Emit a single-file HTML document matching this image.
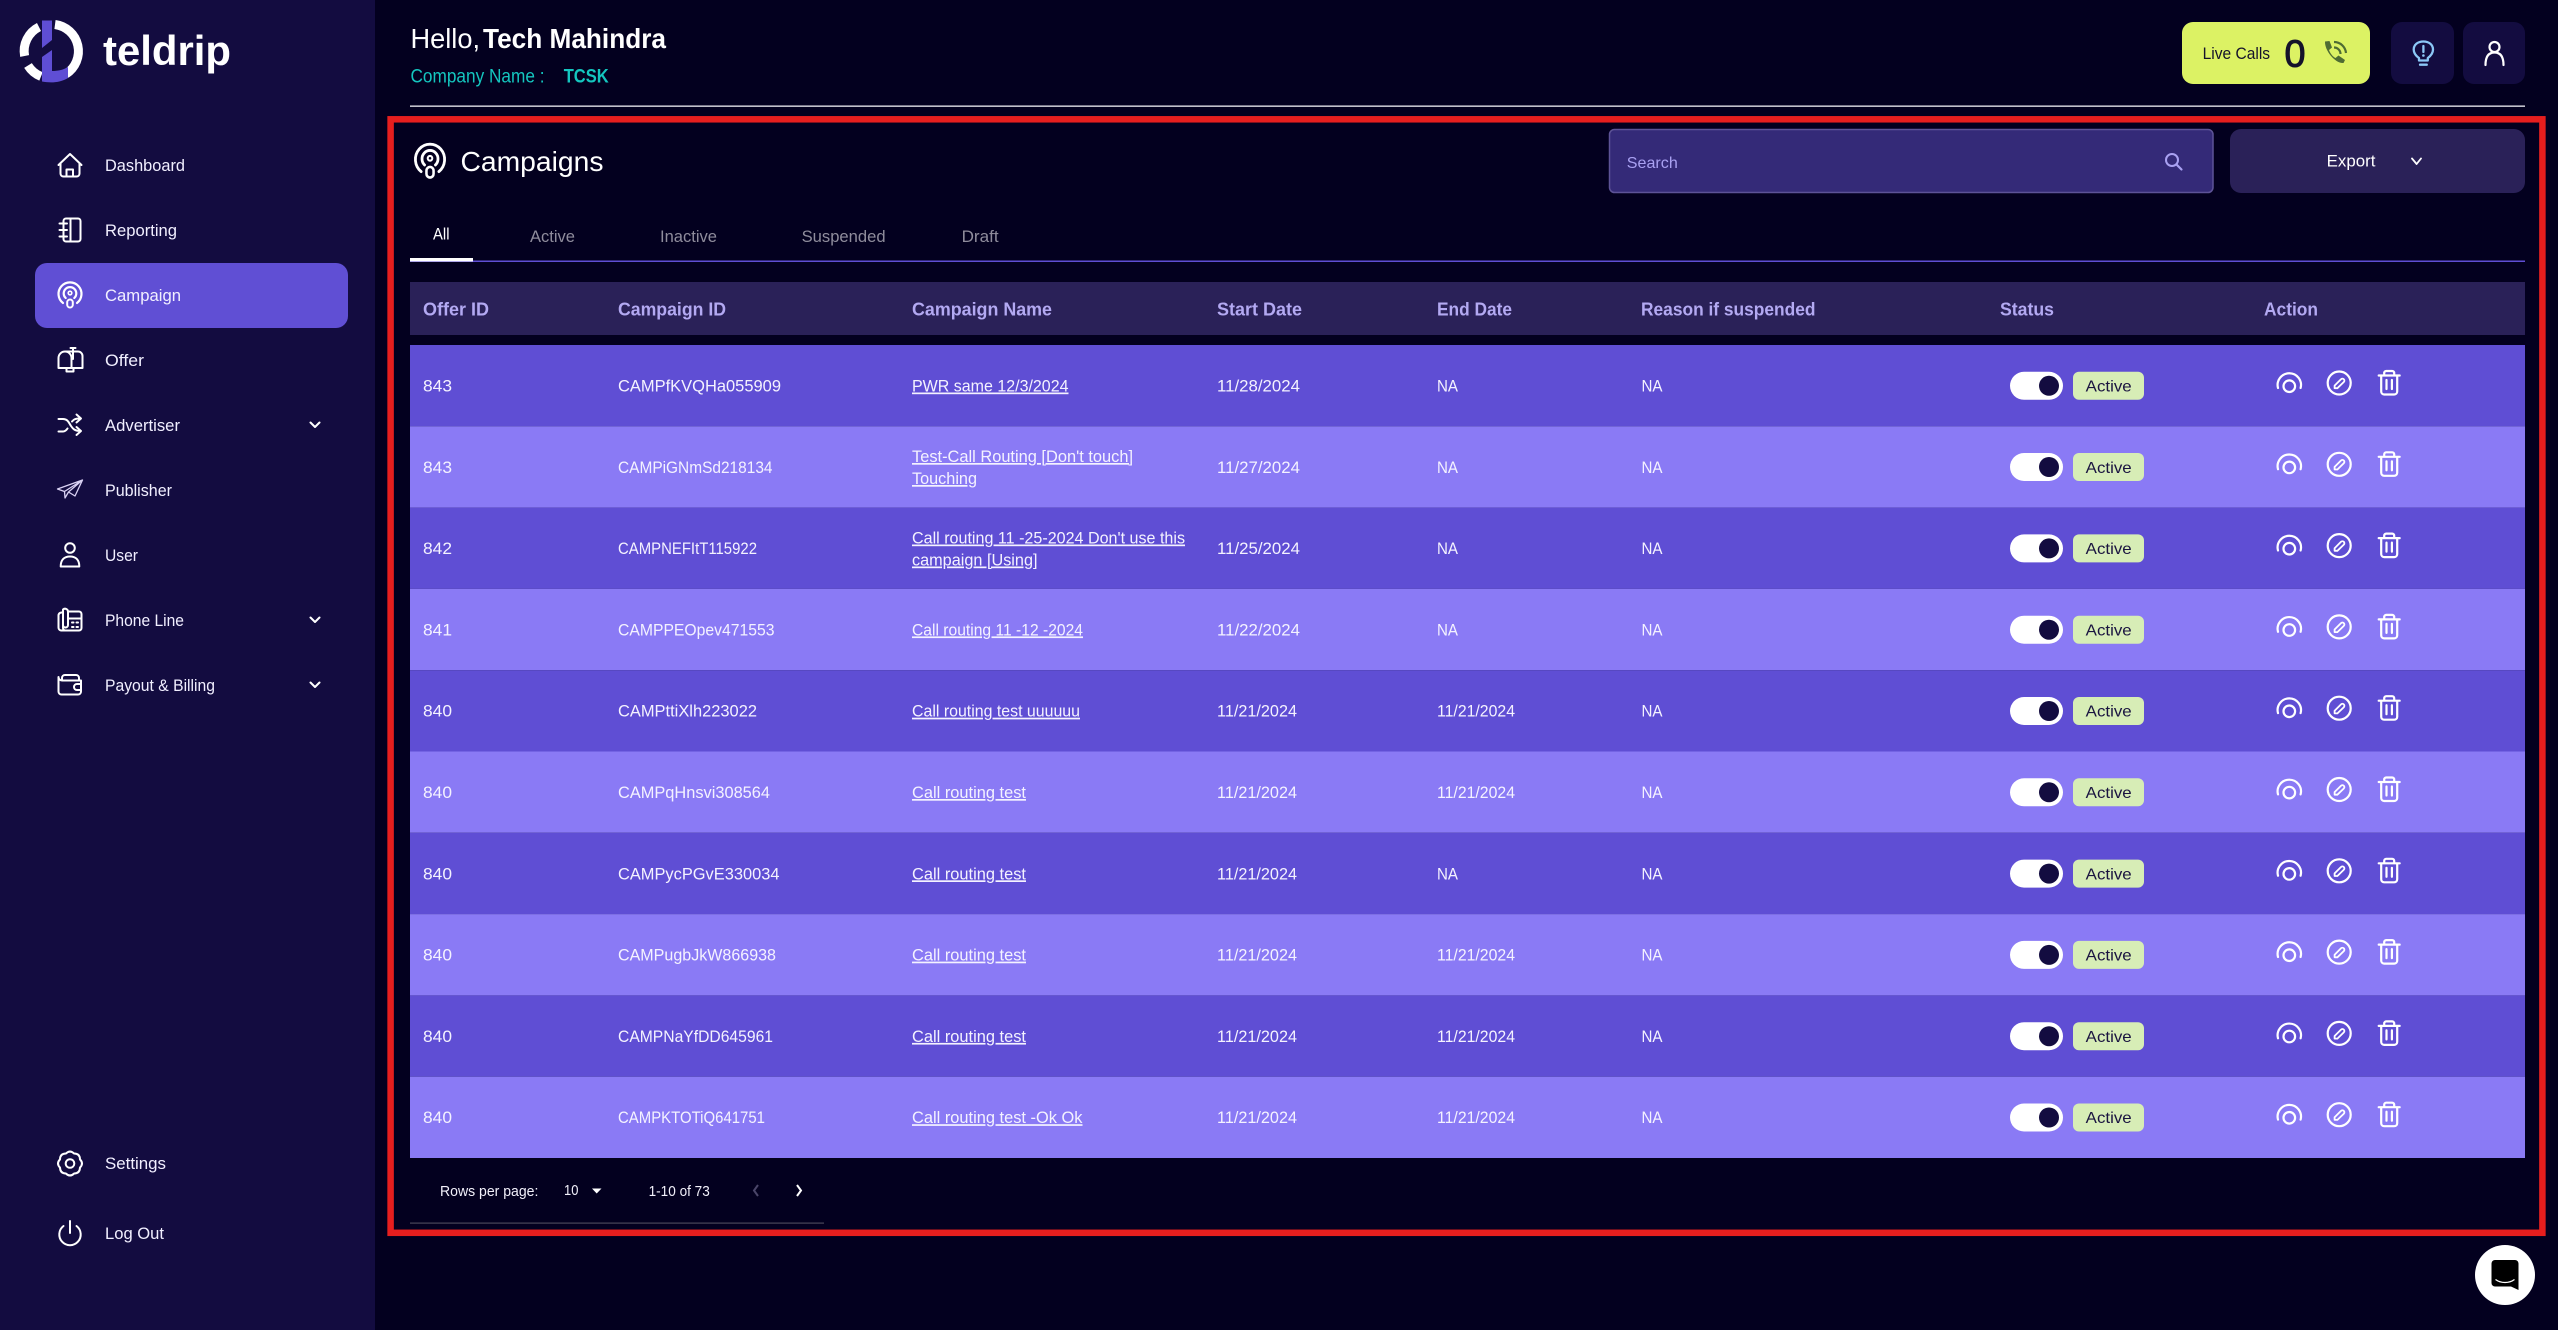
<!DOCTYPE html>
<html lang="en">
<head>
<meta charset="utf-8">
<title>Campaigns</title>
<style>
html,body{margin:0;padding:0;background:#03001f;width:2558px;height:1330px;overflow:hidden}
svg{display:block}
text{font-family:"Liberation Sans",sans-serif;white-space:pre}
.n{font-size:16.500px;fill:#f1efff}
.th{font-size:18.300px;fill:#b3a9f2;font-weight:bold}
.td{font-size:17px;fill:#f4f2ff}
.a{font-size:17px;fill:#f4f2ff;text-decoration:underline}
.b{font-size:16px;fill:#1a1440}
.tab{font-size:16.500px;fill:#8f8c9c}
.i{fill:none;stroke:#fff;stroke-width:2;stroke-linecap:round;stroke-linejoin:round}
</style>
</head>
<body>
<svg xmlns="http://www.w3.org/2000/svg" width="2558" height="1330" viewBox="0 0 2558 1330">
<defs>
<g id="eye" fill="none" stroke="#fff" stroke-width="2.200" stroke-linecap="round"><path d="M-11.300 2.500A11.700 11.700 0 1 1 11.300 2.500"/><circle cx="0" cy="0.700" r="5.800"/></g>
<g id="edit" fill="none" stroke="#fff" stroke-width="2.200" stroke-linecap="round" stroke-linejoin="round"><circle r="11.500"/><path d="M-4.600 2.600L1.800-3.800A1.900 1.900 0 0 1 4.600-1L-1.800 5.200L-4.600 5.200Z" stroke-width="1.800"/></g>
<g id="trash" fill="none" stroke="#fff" stroke-width="2.200" stroke-linecap="round" stroke-linejoin="round"><path d="M-10.500-7.500H10.500M-5-7.500V-10A2 2 0 0 1-3-12H3A2 2 0 0 1 5-10V-7.500M-8-7.500V8.500A3 3 0 0 0-5 11.500H5A3 3 0 0 0 8 8.500V-7.500M-2.700-3V6M2.700-3V6"/></g>
<g id="bc" fill="none" stroke-linecap="round">
<path d="M6 21.500A11.500 11.500 0 1 1 20 21.500" stroke-width="2.200"/>
<path d="M8.700 16.500A6.300 6.300 0 1 1 17.300 16.500" stroke-width="2.200"/>
<circle cx="13" cy="11.500" r="1.800" stroke-width="1.600"/>
<rect x="10.200" y="18" width="5.600" height="8" rx="2.800" stroke-width="2"/>
</g>
<g id="row-t"><rect x="0" y="-14" width="53" height="28" rx="14" fill="#fff"/><circle cx="39" cy="0" r="10" fill="#130c40"/><rect x="63" y="-14" width="71" height="28" rx="6" fill="#d7edb6"/></g>
</defs>

<rect width="2558" height="1330" fill="#03001f"/>
<rect width="375" height="1330" fill="#130c40"/>

<!-- logo -->
<g fill="none" stroke="#fff" stroke-width="9">
<path d="M39 27A27 27 0 0 0 24.600 56"/>
<path d="M55 24.500A27 27 0 0 1 66 74"/>
<path d="M28 65.500A27 27 0 0 0 41 76.400"/>
</g>
<path d="M42 20.500H52V40L42 48ZM42 57L52 50V71C58 71 63 70 68 67V78C60 83 50 83 42 81.500Z" fill="#5f4ed4"/>
<text x="103" y="65" font-size="42" font-weight="bold" fill="#fff" textLength="128" lengthAdjust="spacingAndGlyphs">teldrip</text>

<!-- nav -->
<rect x="35" y="263" width="313" height="65" rx="12" fill="#604fd4"/>
<text class="n" x="105" y="171" textLength="80" lengthAdjust="spacingAndGlyphs">Dashboard</text>
<text class="n" x="105" y="236" textLength="72" lengthAdjust="spacingAndGlyphs">Reporting</text>
<text class="n" x="105" y="301" textLength="76" lengthAdjust="spacingAndGlyphs">Campaign</text>
<text class="n" x="105" y="366" textLength="39" lengthAdjust="spacingAndGlyphs">Offer</text>
<text class="n" x="105" y="431" textLength="75" lengthAdjust="spacingAndGlyphs">Advertiser</text>
<text class="n" x="105" y="496" textLength="67" lengthAdjust="spacingAndGlyphs">Publisher</text>
<text class="n" x="105" y="561" textLength="33" lengthAdjust="spacingAndGlyphs">User</text>
<text class="n" x="105" y="626" textLength="79" lengthAdjust="spacingAndGlyphs">Phone Line</text>
<text class="n" x="105" y="691" textLength="110" lengthAdjust="spacingAndGlyphs">Payout &amp; Billing</text>
<text class="n" x="105" y="1169" textLength="61" lengthAdjust="spacingAndGlyphs">Settings</text>
<text class="n" x="105" y="1239" textLength="59" lengthAdjust="spacingAndGlyphs">Log Out</text>

<g class="i">
<!-- home -->
<path d="M58.500 165L70 154L81.500 165M60.500 163.500V173.500A3 3 0 0 0 63.500 176.500H76.500A3 3 0 0 0 79.500 173.500V163.500M66.500 176.500V169.500H73V176.500"/>
<!-- reporting -->
<path d="M66 218.500H78A2.500 2.500 0 0 1 80.500 221V239A2.500 2.500 0 0 1 78 241.500H66A2.500 2.500 0 0 1 63.500 239V221A2.500 2.500 0 0 1 66 218.500ZM70.500 218.500V241.500M59.500 223.500H67M59.500 230H67M59.500 236.500H67"/>
<!-- offer mailbox -->
<path d="M65 351.500H78A4.500 4.500 0 0 1 82.500 356V368H58.500V358A6.500 6.500 0 0 1 65 351.500A6.500 6.500 0 0 1 71.500 358V368M70.500 348H75.500M73 348V359M66.500 368V371.500H73.500V368"/>
<!-- shuffle -->
<path d="M58.500 419H63C68 419 69 423 71 426C73 429 75 431 80 431M58.500 431.500H63C65 431.500 66.500 430 67.500 428.500M72 421.500C74 419 76 418.500 80 418.500M76.500 414.500L81 418.500L76.500 422.500M76.500 427L81 431L76.500 435"/>
<!-- user -->
<circle cx="70" cy="548" r="4.800"/>
<path d="M60.700 566.500C60.700 560 64 556.500 70 556.500C76 556.500 79.300 560 79.300 566.500Z"/>
<!-- phone -->
<path d="M63 612V628A2.500 2.500 0 0 0 65.500 630.500H79A2.500 2.500 0 0 0 81.500 628V614A2.500 2.500 0 0 0 79 611.500H68M63 613A3 3 0 0 0 58.500 615V627.500A3 3 0 0 0 61 630.500H65.500M63 609.500A3 3 0 0 1 68 612V625A2.500 2.500 0 0 1 63 625ZM68 618.500H81.500"/>
<path d="M72 622.500h1.500M76.500 622.500h1.500M72 627h1.500M76.500 627h1.500"/>
<!-- wallet -->
<path d="M62 679.500V678A3 3 0 0 1 65 675H76A3 3 0 0 1 79 678V680M58.500 679V691.500A3 3 0 0 0 61.500 694.500H78A3 3 0 0 0 81 691.500V680.500H62A3.500 3.500 0 0 1 58.500 677V679M81 684H77A2.500 2.500 0 0 0 77 690H81"/>
<!-- settings gear -->
<path transform="translate(70 1163.500)" d="M9.980-4.130Q14 0 9.980 4.130Q9.900 9.900 4.130 9.980Q0 14-4.130 9.980Q-9.900 9.900-9.980 4.130Q-14 0-9.980-4.130Q-9.900-9.900-4.130-9.980Q0-14 4.130-9.980Q9.900-9.900 9.980-4.130Z"/>
<circle cx="70" cy="1163.500" r="4.300"/>
<!-- power -->
<path d="M70 1221V1233M63.500 1226A10.700 10.700 0 1 0 76.500 1226"/>
<!-- chevrons -->
<path d="M310.500 422.500L315 427L319.500 422.500M310.500 617.500L315 622L319.500 617.500M310.500 682.500L315 687L319.500 682.500"/>
</g>
<!-- publisher plane -->
<path d="M57.500 489L82.500 480L75 496L68.500 492L65 498L64.500 491.500ZM64.500 491.500L82.500 480L68.500 492" fill="none" stroke="#d9d1f3" stroke-width="1.300" stroke-linejoin="round"/>
<use href="#bc" x="57" y="281.500" stroke="#fff"/>

<!-- header -->
<text x="410.500" y="48" font-size="28" fill="#fff" textLength="69.500" lengthAdjust="spacingAndGlyphs">Hello,</text>
<text x="483" y="48" font-size="28" font-weight="bold" fill="#fff" textLength="183" lengthAdjust="spacingAndGlyphs">Tech Mahindra</text>
<text x="410.500" y="82.500" font-size="19" fill="#14c6bf" textLength="134" lengthAdjust="spacingAndGlyphs">Company Name :</text>
<text x="563.700" y="82.500" font-size="19" font-weight="bold" fill="#14c6bf" textLength="45" lengthAdjust="spacingAndGlyphs">TCSK</text>
<rect x="410" y="105.500" width="2115" height="1.300" fill="#f0f0f4"/>

<!-- live calls -->
<rect x="2182" y="22" width="188" height="62" rx="11" fill="#dcf264"/>
<text x="2202.600" y="59" font-size="16.500" fill="#15122b" textLength="67.500" lengthAdjust="spacingAndGlyphs">Live Calls</text>
<text x="2284.500" y="66.500" font-size="38" fill="#15122b" stroke="#15122b" stroke-width="1" textLength="21" lengthAdjust="spacingAndGlyphs">0</text>
<path d="M2325 41.500L2329.500 41L2332 47.500L2329 50C2330 53 2333 57 2335.500 58L2338.500 55.500L2345 60L2343.500 63C2336 64 2324.500 51 2325 41.500Z" fill="#4f6c33"/>
<path d="M2334 42A12 12 0 0 1 2346 53M2334 47.500A6.500 6.500 0 0 1 2340.500 54" fill="none" stroke="#4f6c33" stroke-width="2.200"/>
<rect x="2391" y="22" width="63" height="62" rx="11" fill="#130c40"/>
<rect x="2463" y="22" width="62" height="62" rx="11" fill="#130c40"/>
<path d="M2419 60.500V58C2415.500 55.500 2413.700 52.500 2413.700 49.500C2413.700 44.500 2418 41.500 2423.400 41.500C2428.800 41.500 2433 44.500 2433 49.500C2433 52.500 2431.200 55.500 2427.800 58V60.500ZM2420 64.700H2426.800M2423.400 46V52" fill="none" stroke="#8cc8f7" stroke-width="2.300" stroke-linecap="round" stroke-linejoin="round"/>
<circle cx="2423.400" cy="55.500" r="1.300" fill="#8cc8f7"/>
<circle cx="2494.500" cy="47" r="5" fill="none" stroke="#fff" stroke-width="2.200"/>
<path d="M2485.500 65C2485.500 56 2489 52.500 2494.500 52.500C2500 52.500 2503.500 56 2503.500 65" fill="none" stroke="#fff" stroke-width="2.200" stroke-linecap="round"/>

<!-- campaigns heading -->
<g transform="translate(413.500 143) scale(1.270 1.330)"><use href="#bc" stroke="#fff"/></g>
<text x="460.500" y="171" font-size="27.500" fill="#fff" textLength="143" lengthAdjust="spacingAndGlyphs">Campaigns</text>

<!-- search / export -->
<rect x="1609.500" y="129.500" width="603.500" height="63" rx="5" fill="#342a78" stroke="#5d5397" stroke-width="1.500"/>
<text x="1626.800" y="168" font-size="16" fill="#a9a1f2" textLength="51" lengthAdjust="spacingAndGlyphs">Search</text>
<circle cx="2172" cy="160" r="6" fill="none" stroke="#a9a1f2" stroke-width="2"/>
<path d="M2176.500 164.500L2181.500 169.500" stroke="#a9a1f2" stroke-width="2.200" stroke-linecap="round"/>
<rect x="2230" y="129" width="295" height="64" rx="11" fill="#2a2158"/>
<text x="2326.700" y="166.500" font-size="16.500" fill="#fff" textLength="48.700" lengthAdjust="spacingAndGlyphs">Export</text>
<path d="M2412 158.500L2416.600 164L2421 158.500" fill="none" stroke="#fff" stroke-width="1.800" stroke-linecap="round" stroke-linejoin="round"/>

<!-- tabs -->
<text x="433" y="239.500" font-size="16.500" fill="#fff" textLength="16.500" lengthAdjust="spacingAndGlyphs">All</text>
<text class="tab" x="530" y="242" textLength="45" lengthAdjust="spacingAndGlyphs">Active</text>
<text class="tab" x="660" y="242" textLength="57" lengthAdjust="spacingAndGlyphs">Inactive</text>
<text class="tab" x="801.600" y="242" textLength="84" lengthAdjust="spacingAndGlyphs">Suspended</text>
<text class="tab" x="961.600" y="242" textLength="37" lengthAdjust="spacingAndGlyphs">Draft</text>
<rect x="410" y="260.500" width="2115" height="1.500" fill="#5f4ed4"/>
<rect x="410" y="258" width="63" height="3.500" fill="#fff"/>

<!-- table head -->
<rect x="410" y="282" width="2115" height="53" fill="#2a2158"/>
<text class="th" x="423" y="315.500" textLength="66" lengthAdjust="spacingAndGlyphs">Offer ID</text>
<text class="th" x="618" y="315.500" textLength="108" lengthAdjust="spacingAndGlyphs">Campaign ID</text>
<text class="th" x="912" y="315.500" textLength="140" lengthAdjust="spacingAndGlyphs">Campaign Name</text>
<text class="th" x="1217" y="315.500" textLength="85" lengthAdjust="spacingAndGlyphs">Start Date</text>
<text class="th" x="1437" y="315.500" textLength="75" lengthAdjust="spacingAndGlyphs">End Date</text>
<text class="th" x="1641" y="315.500" textLength="174.500" lengthAdjust="spacingAndGlyphs">Reason if suspended</text>
<text class="th" x="2000" y="315.500" textLength="54" lengthAdjust="spacingAndGlyphs">Status</text>
<text class="th" x="2264" y="315.500" textLength="54" lengthAdjust="spacingAndGlyphs">Action</text>

<!-- rows -->
<rect x="410" y="345" width="2115" height="81.300" fill="#5f4ed4"/>
<rect x="410" y="426.300" width="2115" height="81.300" fill="#8a7af5"/>
<rect x="410" y="507.600" width="2115" height="81.300" fill="#5f4ed4"/>
<rect x="410" y="588.900" width="2115" height="81.300" fill="#8a7af5"/>
<rect x="410" y="670.200" width="2115" height="81.300" fill="#5f4ed4"/>
<rect x="410" y="751.500" width="2115" height="81.300" fill="#8a7af5"/>
<rect x="410" y="832.800" width="2115" height="81.300" fill="#5f4ed4"/>
<rect x="410" y="914.100" width="2115" height="81.300" fill="#8a7af5"/>
<rect x="410" y="995.400" width="2115" height="81.300" fill="#5f4ed4"/>
<rect x="410" y="1076.700" width="2115" height="81.300" fill="#8a7af5"/>

<!-- row 1 -->
<text class="td" x="423" y="391.500" textLength="29" lengthAdjust="spacingAndGlyphs">843</text>
<text class="td" x="618" y="391.500" textLength="163" lengthAdjust="spacingAndGlyphs">CAMPfKVQHa055909</text>
<text class="a" x="912" y="391.500" textLength="156.500" lengthAdjust="spacingAndGlyphs">PWR same 12/3/2024</text>
<text class="td" x="1217" y="391.500" textLength="83" lengthAdjust="spacingAndGlyphs">11/28/2024</text>
<text class="td" x="1437" y="391.500" textLength="21" lengthAdjust="spacingAndGlyphs">NA</text>
<text class="td" x="1641.500" y="391.500" textLength="21" lengthAdjust="spacingAndGlyphs">NA</text>
<!-- row 2 -->
<text class="td" x="423" y="472.800" textLength="29" lengthAdjust="spacingAndGlyphs">843</text>
<text class="td" x="618" y="472.800" textLength="154.500" lengthAdjust="spacingAndGlyphs">CAMPiGNmSd218134</text>
<text class="a" x="912" y="462" textLength="221" lengthAdjust="spacingAndGlyphs">Test-Call Routing [Don't touch]</text>
<text class="a" x="912" y="484" textLength="65" lengthAdjust="spacingAndGlyphs">Touching</text>
<text class="td" x="1217" y="472.800" textLength="83" lengthAdjust="spacingAndGlyphs">11/27/2024</text>
<text class="td" x="1437" y="472.800" textLength="21" lengthAdjust="spacingAndGlyphs">NA</text>
<text class="td" x="1641.500" y="472.800" textLength="21" lengthAdjust="spacingAndGlyphs">NA</text>
<!-- row 3 -->
<text class="td" x="423" y="554.100" textLength="29" lengthAdjust="spacingAndGlyphs">842</text>
<text class="td" x="618" y="554.100" textLength="139" lengthAdjust="spacingAndGlyphs">CAMPNEFItT115922</text>
<text class="a" x="912" y="543.500" textLength="273" lengthAdjust="spacingAndGlyphs">Call routing 11 -25-2024 Don't use this</text>
<text class="a" x="912" y="565.500" textLength="125.500" lengthAdjust="spacingAndGlyphs">campaign [Using]</text>
<text class="td" x="1217" y="554.100" textLength="83" lengthAdjust="spacingAndGlyphs">11/25/2024</text>
<text class="td" x="1437" y="554.100" textLength="21" lengthAdjust="spacingAndGlyphs">NA</text>
<text class="td" x="1641.500" y="554.100" textLength="21" lengthAdjust="spacingAndGlyphs">NA</text>
<!-- row 4 -->
<text class="td" x="423" y="635.400" textLength="29" lengthAdjust="spacingAndGlyphs">841</text>
<text class="td" x="618" y="635.400" textLength="156.500" lengthAdjust="spacingAndGlyphs">CAMPPEOpev471553</text>
<text class="a" x="912" y="635.400" textLength="171" lengthAdjust="spacingAndGlyphs">Call routing 11 -12 -2024</text>
<text class="td" x="1217" y="635.400" textLength="83" lengthAdjust="spacingAndGlyphs">11/22/2024</text>
<text class="td" x="1437" y="635.400" textLength="21" lengthAdjust="spacingAndGlyphs">NA</text>
<text class="td" x="1641.500" y="635.400" textLength="21" lengthAdjust="spacingAndGlyphs">NA</text>
<!-- row 5 -->
<text class="td" x="423" y="716.700" textLength="29" lengthAdjust="spacingAndGlyphs">840</text>
<text class="td" x="618" y="716.700" textLength="139" lengthAdjust="spacingAndGlyphs">CAMPttiXlh223022</text>
<text class="a" x="912" y="716.700" textLength="168" lengthAdjust="spacingAndGlyphs">Call routing test uuuuuu</text>
<text class="td" x="1217" y="716.700" textLength="80" lengthAdjust="spacingAndGlyphs">11/21/2024</text>
<text class="td" x="1437" y="716.700" textLength="78" lengthAdjust="spacingAndGlyphs">11/21/2024</text>
<text class="td" x="1641.500" y="716.700" textLength="21" lengthAdjust="spacingAndGlyphs">NA</text>
<!-- row 6 -->
<text class="td" x="423" y="798" textLength="29" lengthAdjust="spacingAndGlyphs">840</text>
<text class="td" x="618" y="798" textLength="152" lengthAdjust="spacingAndGlyphs">CAMPqHnsvi308564</text>
<text class="a" x="912" y="798" textLength="114" lengthAdjust="spacingAndGlyphs">Call routing test</text>
<text class="td" x="1217" y="798" textLength="80" lengthAdjust="spacingAndGlyphs">11/21/2024</text>
<text class="td" x="1437" y="798" textLength="78" lengthAdjust="spacingAndGlyphs">11/21/2024</text>
<text class="td" x="1641.500" y="798" textLength="21" lengthAdjust="spacingAndGlyphs">NA</text>
<!-- row 7 -->
<text class="td" x="423" y="879.300" textLength="29" lengthAdjust="spacingAndGlyphs">840</text>
<text class="td" x="618" y="879.300" textLength="161.500" lengthAdjust="spacingAndGlyphs">CAMPycPGvE330034</text>
<text class="a" x="912" y="879.300" textLength="114" lengthAdjust="spacingAndGlyphs">Call routing test</text>
<text class="td" x="1217" y="879.300" textLength="80" lengthAdjust="spacingAndGlyphs">11/21/2024</text>
<text class="td" x="1437" y="879.300" textLength="21" lengthAdjust="spacingAndGlyphs">NA</text>
<text class="td" x="1641.500" y="879.300" textLength="21" lengthAdjust="spacingAndGlyphs">NA</text>
<!-- row 8 -->
<text class="td" x="423" y="960.600" textLength="29" lengthAdjust="spacingAndGlyphs">840</text>
<text class="td" x="618" y="960.600" textLength="158" lengthAdjust="spacingAndGlyphs">CAMPugbJkW866938</text>
<text class="a" x="912" y="960.600" textLength="114" lengthAdjust="spacingAndGlyphs">Call routing test</text>
<text class="td" x="1217" y="960.600" textLength="80" lengthAdjust="spacingAndGlyphs">11/21/2024</text>
<text class="td" x="1437" y="960.600" textLength="78" lengthAdjust="spacingAndGlyphs">11/21/2024</text>
<text class="td" x="1641.500" y="960.600" textLength="21" lengthAdjust="spacingAndGlyphs">NA</text>
<!-- row 9 -->
<text class="td" x="423" y="1041.900" textLength="29" lengthAdjust="spacingAndGlyphs">840</text>
<text class="td" x="618" y="1041.900" textLength="155" lengthAdjust="spacingAndGlyphs">CAMPNaYfDD645961</text>
<text class="a" x="912" y="1041.900" textLength="114" lengthAdjust="spacingAndGlyphs">Call routing test</text>
<text class="td" x="1217" y="1041.900" textLength="80" lengthAdjust="spacingAndGlyphs">11/21/2024</text>
<text class="td" x="1437" y="1041.900" textLength="78" lengthAdjust="spacingAndGlyphs">11/21/2024</text>
<text class="td" x="1641.500" y="1041.900" textLength="21" lengthAdjust="spacingAndGlyphs">NA</text>
<!-- row 10 -->
<text class="td" x="423" y="1123.200" textLength="29" lengthAdjust="spacingAndGlyphs">840</text>
<text class="td" x="618" y="1123.200" textLength="147" lengthAdjust="spacingAndGlyphs">CAMPKTOTiQ641751</text>
<text class="a" x="912" y="1123.200" textLength="170.500" lengthAdjust="spacingAndGlyphs">Call routing test -Ok Ok</text>
<text class="td" x="1217" y="1123.200" textLength="80" lengthAdjust="spacingAndGlyphs">11/21/2024</text>
<text class="td" x="1437" y="1123.200" textLength="78" lengthAdjust="spacingAndGlyphs">11/21/2024</text>
<text class="td" x="1641.500" y="1123.200" textLength="21" lengthAdjust="spacingAndGlyphs">NA</text>

<!-- toggles + badges -->
<use href="#row-t" x="2010" y="385.800"/><text class="b" x="2085.700" y="391.500" textLength="46" lengthAdjust="spacingAndGlyphs">Active</text>
<use href="#row-t" x="2010" y="467"/><text class="b" x="2085.700" y="472.800" textLength="46" lengthAdjust="spacingAndGlyphs">Active</text>
<use href="#row-t" x="2010" y="548.400"/><text class="b" x="2085.700" y="554.100" textLength="46" lengthAdjust="spacingAndGlyphs">Active</text>
<use href="#row-t" x="2010" y="629.700"/><text class="b" x="2085.700" y="635.400" textLength="46" lengthAdjust="spacingAndGlyphs">Active</text>
<use href="#row-t" x="2010" y="711"/><text class="b" x="2085.700" y="716.700" textLength="46" lengthAdjust="spacingAndGlyphs">Active</text>
<use href="#row-t" x="2010" y="792.300"/><text class="b" x="2085.700" y="798" textLength="46" lengthAdjust="spacingAndGlyphs">Active</text>
<use href="#row-t" x="2010" y="873.600"/><text class="b" x="2085.700" y="879.300" textLength="46" lengthAdjust="spacingAndGlyphs">Active</text>
<use href="#row-t" x="2010" y="954.900"/><text class="b" x="2085.700" y="960.600" textLength="46" lengthAdjust="spacingAndGlyphs">Active</text>
<use href="#row-t" x="2010" y="1036.200"/><text class="b" x="2085.700" y="1041.900" textLength="46" lengthAdjust="spacingAndGlyphs">Active</text>
<use href="#row-t" x="2010" y="1117.500"/><text class="b" x="2085.700" y="1123.200" textLength="46" lengthAdjust="spacingAndGlyphs">Active</text>

<!-- action icons -->
<use href="#eye" x="2289.300" y="385.500"/><use href="#edit" x="2339.200" y="383"/><use href="#trash" x="2389.200" y="383"/>
<use href="#eye" x="2289.300" y="466.700"/><use href="#edit" x="2339.200" y="464.300"/><use href="#trash" x="2389.200" y="464.300"/>
<use href="#eye" x="2289.300" y="548"/><use href="#edit" x="2339.200" y="545.600"/><use href="#trash" x="2389.200" y="545.600"/>
<use href="#eye" x="2289.300" y="629.300"/><use href="#edit" x="2339.200" y="626.900"/><use href="#trash" x="2389.200" y="626.900"/>
<use href="#eye" x="2289.300" y="710.600"/><use href="#edit" x="2339.200" y="708.200"/><use href="#trash" x="2389.200" y="708.200"/>
<use href="#eye" x="2289.300" y="791.900"/><use href="#edit" x="2339.200" y="789.500"/><use href="#trash" x="2389.200" y="789.500"/>
<use href="#eye" x="2289.300" y="873.200"/><use href="#edit" x="2339.200" y="870.800"/><use href="#trash" x="2389.200" y="870.800"/>
<use href="#eye" x="2289.300" y="954.500"/><use href="#edit" x="2339.200" y="952.100"/><use href="#trash" x="2389.200" y="952.100"/>
<use href="#eye" x="2289.300" y="1035.800"/><use href="#edit" x="2339.200" y="1033.400"/><use href="#trash" x="2389.200" y="1033.400"/>
<use href="#eye" x="2289.300" y="1117.100"/><use href="#edit" x="2339.200" y="1114.700"/><use href="#trash" x="2389.200" y="1114.700"/>

<!-- pagination -->
<text x="440" y="1196" font-size="15" fill="#f2f0fa" textLength="98.400" lengthAdjust="spacingAndGlyphs">Rows per page:</text>
<text x="564" y="1195" font-size="15" fill="#f2f0fa" textLength="14.400" lengthAdjust="spacingAndGlyphs">10</text>
<path d="M592 1188.500H601.500L596.700 1193.500Z" fill="#fff"/>
<text x="648.600" y="1196" font-size="15" fill="#f2f0fa" textLength="61.200" lengthAdjust="spacingAndGlyphs">1-10 of 73</text>
<path d="M758 1185L754 1190.500L758 1196" fill="none" stroke="#4a4569" stroke-width="2"/>
<path d="M797 1185L801 1190.500L797 1196" fill="none" stroke="#fff" stroke-width="2"/>
<rect x="410" y="1222.500" width="414" height="1.200" fill="#4a4659"/>

<!-- chat -->
<circle cx="2505" cy="1275" r="30" fill="#fff"/>
<path d="M2495 1260H2515A3.500 3.500 0 0 1 2518.500 1263.500V1290L2511 1286.500H2495A3.500 3.500 0 0 1 2491.500 1283V1263.500A3.500 3.500 0 0 1 2495 1260Z" fill="#000"/>
<path d="M2495.500 1279.500C2501 1283.500 2509 1283.500 2514.500 1279.500" fill="none" stroke="#fff" stroke-width="1.300"/>

<!-- red annotation border -->
<rect x="390.600" y="119.300" width="2151.800" height="1113.500" fill="none" stroke="#e61e1e" stroke-width="6.500"/>
</svg>
</body>
</html>
